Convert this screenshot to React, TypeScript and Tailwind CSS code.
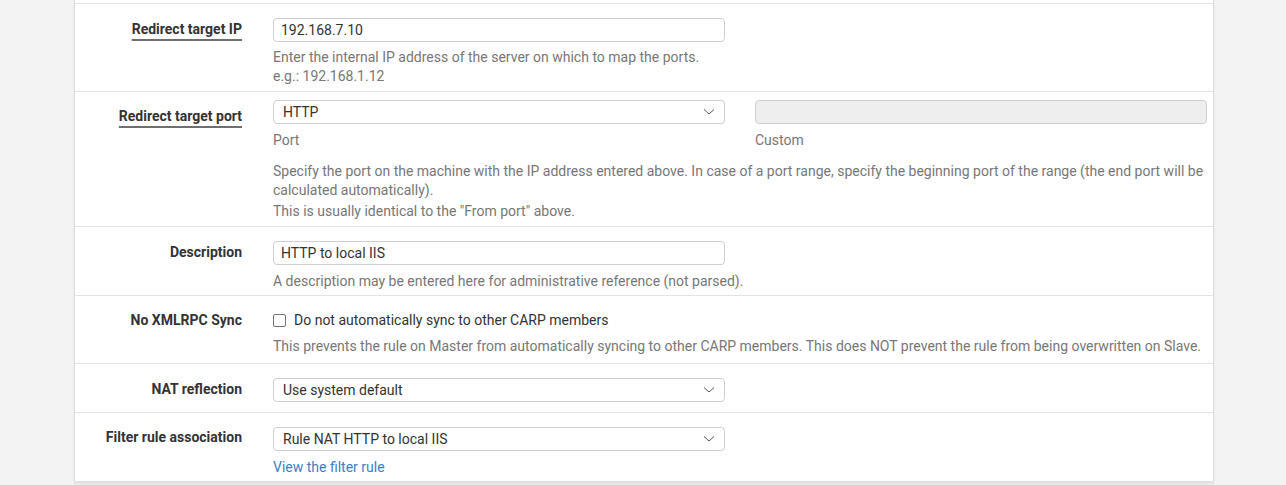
import React from 'react';

const font = { fontFamily: 'Roboto, "Liberation Sans", sans-serif' };

function Chevron() {
    return (
        <svg width="12" height="8" viewBox="0 0 12 8" className="absolute right-[9px] top-1/2 -translate-y-1/2">
            <path d="M1 1.5 L6 6 L11 1.5" fill="none" stroke="#555" strokeWidth="1" />
        </svg>
    );
}

function TextBox({ value }: { value: string }) {
    return (
        <div className="w-[452px] h-[24px] border border-[#cfcfcf] rounded-[4px] bg-white px-[7px] flex items-center text-[14px] text-[#333]">
            {value}
        </div>
    );
}

function SelectBox({ value }: { value: string }) {
    return (
        <div className="relative w-[452px] h-[24px] border border-[#cfcfcf] rounded-[4px] bg-white px-[9px] flex items-center text-[14px] text-[#333]">
            {value}
            <Chevron />
        </div>
    );
}

function Row({ label, required, labelPad, pad, children }: { label: string; required?: boolean; labelPad: string; pad: string; children: React.ReactNode }) {
    return (
        <div className="flex border-t border-[#e3e3e3]">
            <div className={`w-[198px] shrink-0 pr-[31px] text-right text-[14px] font-bold text-[#333] ${labelPad}`}>
                <span className={required ? 'underline decoration-2 decoration-[#6f6f6f] underline-offset-[5px]' : ''}>{label}</span>
            </div>
            <div className={`flex-1 pr-[6px] ${pad}`}>{children}</div>
        </div>
    );
}

export default function App() {
    return (
        <div className="min-h-screen bg-[#f3f3f3]" style={font}>
            <div className="ml-[74px] w-[1140px] bg-white border-x border-[#dcdcdc] pt-[3px] shadow-[0_3px_2px_rgba(0,0,0,0.08)] leading-[19px]">
                <Row label="Redirect target IP" required labelPad="pt-[16px]" pad="pt-[14px] pb-[5px]">
                    <TextBox value="192.168.7.10" />
                    <div className="text-[14px] text-[#777] mt-[6px]">
                        <div>Enter the internal IP address of the server on which to map the ports.</div>
                        <div>e.g.: 192.168.1.12</div>
                    </div>
                </Row>
                <Row label="Redirect target port" required labelPad="pt-[15px]" pad="pt-[8px] pb-[5px]">
                    <div className="flex gap-[30px]">
                        <div>
                            <SelectBox value="HTTP" />
                            <div className="text-[14px] text-[#777] mt-[7px]">Port</div>
                        </div>
                        <div>
                            <div className="w-[452px] h-[24px] border border-[#cfcfcf] rounded-[4px] bg-[#eeeeee]" />
                            <div className="text-[14px] text-[#777] mt-[7px]">Custom</div>
                        </div>
                    </div>
                    <div className="text-[14px] text-[#777] mt-[12px]">
                        <div>Specify the port on the machine with the IP address entered above. In case of a port range, specify the beginning port of the range (the end port will be calculated automatically).</div>
                        <div className="mt-[2px]">This is usually identical to the "From port" above.</div>
                    </div>
                </Row>
                <Row label="Description" labelPad="pt-[16px]" pad="pt-[14px] pb-[4px]">
                    <TextBox value="HTTP to local IIS" />
                    <div className="text-[14px] text-[#777] mt-[7px]">A description may be entered here for administrative reference (not parsed).</div>
                </Row>
                <Row label="No XMLRPC Sync" labelPad="pt-[15px]" pad="pt-[15px] pb-[7px]">
                    <div className="flex items-center gap-[8px] text-[14px] text-[#333]">
                        <span className="w-[13px] h-[13px] border border-[#767676] rounded-[2px] bg-white" />
                        <span>Do not automatically sync to other CARP members</span>
                    </div>
                    <div className="text-[14px] text-[#777] mt-[7px]">This prevents the rule on Master from automatically syncing to other CARP members. This does NOT prevent the rule from being overwritten on Slave.</div>
                </Row>
                <Row label="NAT reflection" labelPad="pt-[16px]" pad="pt-[14px] pb-[10px]">
                    <SelectBox value="Use system default" />
                </Row>
                <Row label="Filter rule association" labelPad="pt-[15px]" pad="pt-[14px] pb-[4px]">
                    <SelectBox value="Rule NAT HTTP to local IIS" />
                    <div className="text-[14px] text-[#3b80c4] mt-[7px]">View the filter rule</div>
                </Row>
            </div>
        </div>
    );
}
